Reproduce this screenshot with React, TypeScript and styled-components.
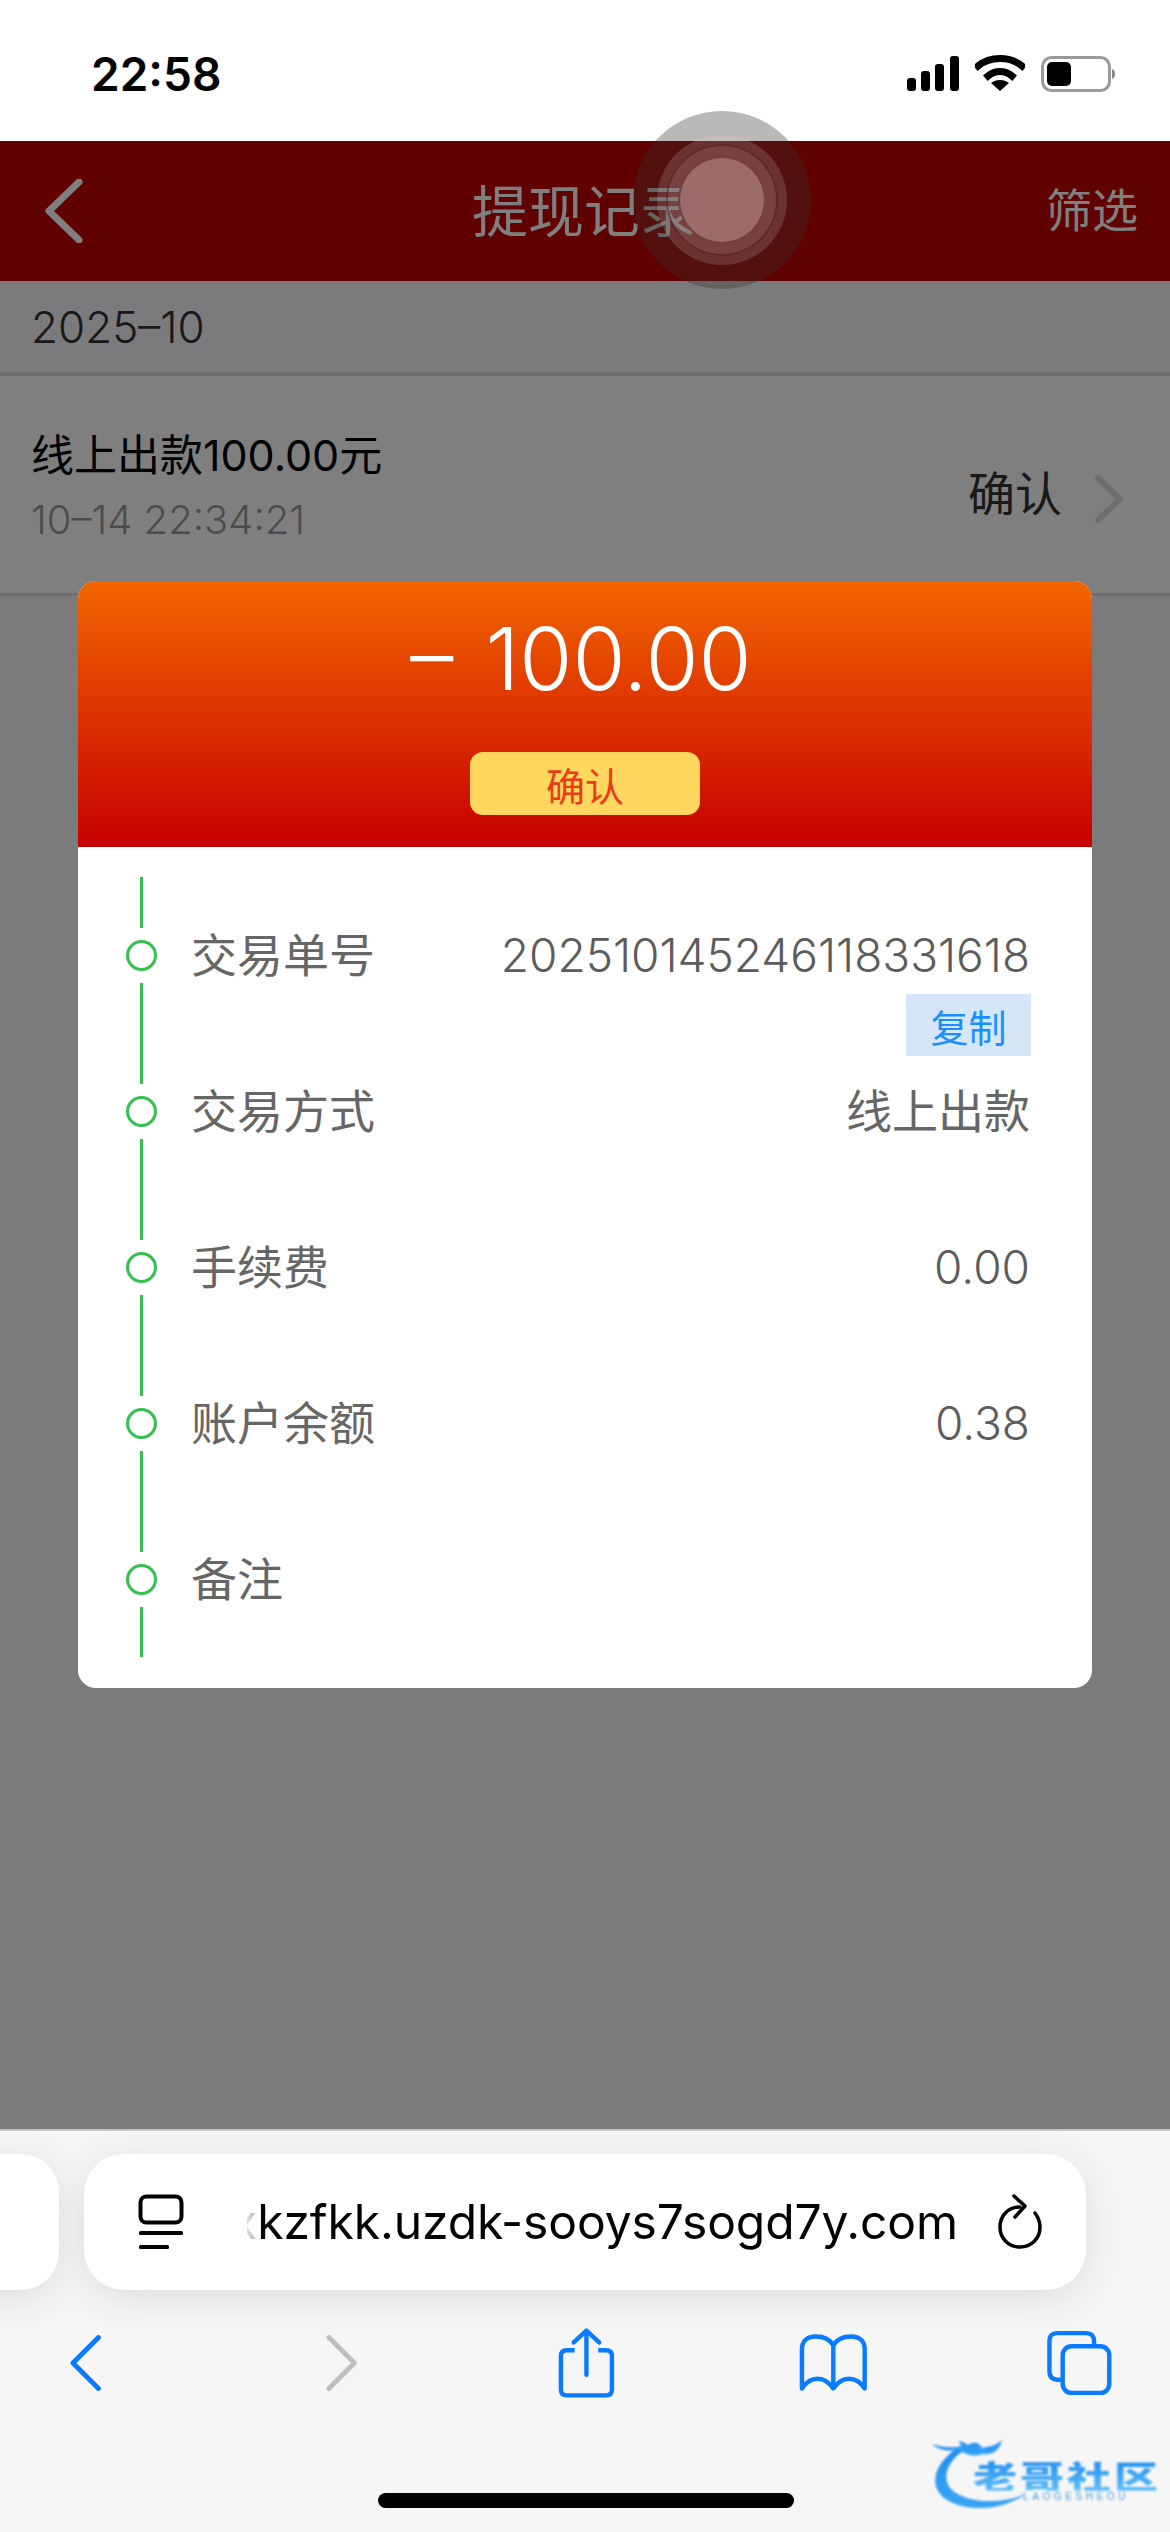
import styled, { createGlobalStyle } from "styled-components";

const UI_FONT = `Inter, "Noto Sans CJK SC", sans-serif`;

const GlobalStyle = createGlobalStyle`
  html, body {
    margin: 0;
    padding: 0;
    background: #fff;
    font-family: ${UI_FONT};
  }
`;

const Phone = styled.div`
  position: relative;
  display: flex;
  flex-direction: column;
  width: 1170px;
  height: 2532px;
  overflow: hidden;
`;

const StatusBar = styled.div`
  display: flex;
  align-items: center;
  justify-content: space-between;
  height: 141px;
  padding: 6px 53px 0 91px;
  box-sizing: border-box;
  background: #fff;
`;

const Clock = styled.div`
  font-size: 46px;
  font-weight: 600;
  color: #000;
`;

const StatusIcons = styled.div`
  display: flex;
  align-items: center;
  gap: 16px;
`;

const Main = styled.div`
  position: relative;
  display: flex;
  flex-direction: column;
  height: 1988px;
  background: #f6f6fa;
`;

const NavBar = styled.div`
  display: flex;
  align-items: center;
  justify-content: space-between;
  height: 140px;
  padding: 0 32px 0 44px;
  box-sizing: border-box;
  background: #c00000;
  color: #fff;
`;

const NavTitle = styled.div`
  font-size: 56px;
  font-weight: 400;
  margin: 0 0 8px 38px;
`;

const NavAction = styled.div`
  font-size: 46px;
  font-weight: 400;
  margin-bottom: 8px;
`;

const DateRow = styled.div`
  height: 95px;
  padding: 0 31px;
  box-sizing: border-box;
  display: flex;
  align-items: center;
  border-bottom: 4px solid #ddd;
  font-size: 44px;
  font-weight: 300;
  color: #333;
`;

const Record = styled.div`
  display: flex;
  align-items: center;
  justify-content: space-between;
  height: 220px;
  padding: 0 46px 0 31px;
  box-sizing: border-box;
  background: #fff;
  border-bottom: 3px solid #ddd;
`;

const RecordTitle = styled.div`
  font-size: 43px;
  font-weight: 400;
  color: #000;
  margin-top: -4px;
`;

const RecordTime = styled.div`
  margin-top: 12px;
  font-size: 40px;
  font-weight: 300;
  color: #999;
`;

const RecordStatus = styled.div`
  display: flex;
  align-items: center;
  gap: 32px;
  margin-top: 12px;
  font-size: 47px;
  font-weight: 400;
  color: #333;
`;

const RecordArrow = styled.svg`
  margin-top: 16px;
`;

const Overlay = styled.div`
  position: absolute;
  inset: 0;
  display: flex;
  justify-content: center;
  align-items: flex-start;
  padding-top: 440px;
  background: rgba(0, 0, 0, 0.5);
`;

const Modal = styled.div`
  width: 1014px;
  border-radius: 18px;
  overflow: hidden;
  background: #fff;
`;

const ModalHead = styled.div`
  display: flex;
  flex-direction: column;
  align-items: center;
  height: 266px;
  padding-top: 15px;
  box-sizing: border-box;
  background: linear-gradient(#f26500, #c60000);
  color: #fff;
`;

const Amount = styled.div`
  margin-right: 8px;
  font-size: 86px;
  font-weight: 300;
  line-height: 126px;
  word-spacing: 8px;
`;

const StatusPill = styled.div`
  display: flex;
  align-items: center;
  justify-content: center;
  width: 230px;
  height: 63px;
  margin-top: 30px;
  border-radius: 13px;
  background: #ffd75f;
  color: #ea3c18;
  font-size: 39px;
  font-weight: 400;
`;

const ModalBody = styled.div`
  padding: 30px 62px 31px 47px;
`;

const Row = styled.div`
  display: flex;
  align-items: center;
  height: 156px;
  font-size: 46px;
  color: #666;
`;

const Marker = styled.div`
  display: flex;
  flex-direction: column;
  align-items: center;
  gap: 12px;
  width: 32px;
  height: 100%;
  margin-right: 34px;
`;

const MarkerLine = styled.div`
  flex: 1;
  width: 3px;
  background: #35c04f;
`;

const MarkerDot = styled.div`
  flex: none;
  width: 31px;
  height: 31px;
  box-sizing: border-box;
  border: 3px solid #35c04f;
  border-radius: 50%;
`;

const RowLabel = styled.div`
  flex: 1;
  font-weight: 400;
  margin-top: -6px;
`;

const RowValue = styled.div<{ $cjk?: boolean }>`
  position: relative;
  font-weight: ${(p) => (p.$cjk ? 400 : 300)};
  margin-top: ${(p) => (p.$cjk ? "-6px" : "0")};
  color: ${(p) => (p.$cjk ? "#666" : "#5c5c5c")};
`;

const CopyButton = styled.div`
  position: absolute;
  right: -1px;
  top: 67px;
  display: flex;
  align-items: center;
  justify-content: center;
  width: 125px;
  height: 62px;
  background: #d5e6f8;
  color: #1a90ff;
  font-size: 38px;
  font-weight: 400;
`;

const Toolbar = styled.div`
  position: relative;
  flex: 1;
  display: flex;
  flex-direction: column;
  background: #f6f6f6;
  border-top: 2px solid #c6c6c6;
`;

const UrlStrip = styled.div`
  display: flex;
  gap: 25px;
  height: 136px;
  margin: 23px 84px 0 -40px;
`;

const TabStub = styled.div`
  flex: none;
  width: 99px;
  border-radius: 38px;
  background: #fff;
  box-shadow: 0 8px 36px rgba(0, 0, 0, 0.1);
`;

const UrlPill = styled.div`
  flex: 1;
  min-width: 0;
  display: flex;
  align-items: center;
  padding: 0 43px 0 54px;
  border-radius: 40px;
  background: #fff;
  box-shadow: 0 8px 36px rgba(0, 0, 0, 0.1);
`;

const UrlIcon = styled.svg`
  flex: none;
`;

const UrlText = styled.div`
  flex: 1;
  min-width: 0;
  display: flex;
  justify-content: flex-end;
  margin: 0 39px 0 63px;
  overflow: hidden;
  white-space: nowrap;
  font-size: 48px;
  letter-spacing: -0.1px;
  line-height: 70px;
  color: #000;
  mask-image: linear-gradient(
    90deg,
    rgba(0, 0, 0, 0.12) 0,
    rgba(0, 0, 0, 0.3) 9px,
    #000 12px
  );
`;

const ActionBar = styled.div`
  display: flex;
  align-items: center;
  justify-content: space-between;
  height: 72px;
  margin-top: 37px;
  padding: 0 58px 0 70px;
`;

const ActionIcon = styled.svg<{ $gap: number }>`
  margin-left: ${(p) => p.$gap}px;
`;

const HomeBar = styled.div`
  position: absolute;
  left: 378px;
  bottom: 24px;
  width: 416px;
  height: 15px;
  border-radius: 8px;
  background: #000;
`;

const Touch = styled.div<{ $size: number; $fill: string; $edge?: string }>`
  display: flex;
  align-items: center;
  justify-content: center;
  flex: none;
  box-sizing: border-box;
  width: ${(p) => p.$size}px;
  height: ${(p) => p.$size}px;
  border-radius: 50%;
  background: ${(p) => p.$fill};
  border: ${(p) => (p.$edge ? `2px solid ${p.$edge}` : "none")};
`;

const TouchAnchor = styled.div`
  position: absolute;
  left: 633px;
  top: 111px;
`;

const Watermark = styled.div`
  position: absolute;
  left: 930px;
  top: 2432px;
  width: 230px;
  height: 84px;
  filter: blur(0.9px);
`;

const WatermarkName = styled.div`
  position: absolute;
  left: 43px;
  top: 27px;
  font-family: "Noto Sans CJK SC", sans-serif;
  font-size: 44px;
  line-height: 44px;
  font-weight: 900;
  letter-spacing: 3px;
  white-space: nowrap;
  transform: scaleY(0.72);
  transform-origin: top left;
  background: linear-gradient(#1f8ef0, #5fbdf8);
  -webkit-background-clip: text;
  background-clip: text;
  color: transparent;
`;

const WatermarkSub = styled.div`
  position: absolute;
  left: 93px;
  top: 60px;
  font-family: "Liberation Sans", sans-serif;
  font-size: 10px;
  line-height: 10px;
  letter-spacing: 3.6px;
  color: #4a9fe0;
  white-space: nowrap;
`;

const rows = [
  { label: "交易单号", value: "202510145246118331618", copy: true },
  { label: "交易方式", value: "线上出款", cjk: true },
  { label: "手续费", value: "0.00" },
  { label: "账户余额", value: "0.38" },
  { label: "备注", value: "" }
];

const BLUE = "#0a7aff";

const App = () => {
  return (
    <Phone>
      <GlobalStyle />
      <StatusBar>
        <Clock>22:58</Clock>
        <StatusIcons>
          <svg width="52" height="35" viewBox="0 0 52 35">
            <rect x="0" y="22" width="9" height="13" rx="3" />
            <rect x="14" y="15" width="9" height="20" rx="3" />
            <rect x="28" y="8" width="9" height="27" rx="3" />
            <rect x="43" y="0" width="9" height="35" rx="3" />
          </svg>
          <svg width="50" height="38" viewBox="0 0 50 38">
            <path
              d="M3 11 C15 1 35 1 47 11"
              fill="none"
              stroke="#000"
              strokeWidth="7"
              strokeLinecap="square"
            />
            <path
              d="M13 21 C20 15 30 15 37 21"
              fill="none"
              stroke="#000"
              strokeWidth="7"
              strokeLinecap="square"
            />
            <path d="M25 36 L16 28 C21 24 29 24 34 28 Z" />
          </svg>
          <svg width="76" height="36" viewBox="0 0 76 36">
            <rect
              x="1.5"
              y="1.5"
              width="67"
              height="33"
              rx="9"
              fill="none"
              stroke="#9a9a9a"
              strokeWidth="3"
            />
            <rect x="6" y="6" width="24" height="24" rx="5" />
            <path d="M71 13 C75 14 75 22 71 23 Z" fill="#8a8a8a" />
          </svg>
        </StatusIcons>
      </StatusBar>

      <Main>
        <NavBar>
          <svg width="40" height="64" viewBox="0 0 40 64">
            <path
              d="M35 3 L5 32 L35 61"
              fill="none"
              stroke="#fff"
              strokeWidth="7"
              strokeLinecap="round"
              strokeLinejoin="round"
            />
          </svg>
          <NavTitle>提现记录</NavTitle>
          <NavAction>筛选</NavAction>
        </NavBar>
        <DateRow>2025–10</DateRow>
        <Record>
          <div>
            <RecordTitle>线上出款100.00元</RecordTitle>
            <RecordTime>10–14 22:34:21</RecordTime>
          </div>
          <RecordStatus>
            确认
            <RecordArrow width="30" height="48" viewBox="0 0 30 48">
              <path
                d="M4 3 L26 24 L4 45"
                fill="none"
                stroke="#ddd"
                strokeWidth="6"
                strokeLinecap="round"
                strokeLinejoin="round"
              />
            </RecordArrow>
          </RecordStatus>
        </Record>

        <Overlay>
          <Modal>
            <ModalHead>
              <Amount>– 100.00</Amount>
              <StatusPill>确认</StatusPill>
            </ModalHead>
            <ModalBody>
              {rows.map((row) => (
                <Row key={row.label}>
                  <Marker>
                    <MarkerLine />
                    <MarkerDot />
                    <MarkerLine />
                  </Marker>
                  <RowLabel>{row.label}</RowLabel>
                  <RowValue $cjk={row.cjk}>
                    {row.value}
                    {row.copy && <CopyButton>复制</CopyButton>}
                  </RowValue>
                </Row>
              ))}
            </ModalBody>
          </Modal>
        </Overlay>
      </Main>

      <TouchAnchor>
        <Touch $size={178} $fill="rgba(55, 50, 45, 0.34)">
          <Touch $size={130} $fill="rgba(225, 215, 215, 0.17)">
            <Touch $size={112} $fill="rgba(235, 220, 220, 0.1)" $edge="rgba(70, 10, 10, 0.45)">
              <Touch $size={88} $fill="rgb(156, 108, 108)" $edge="rgba(70, 10, 10, 0.45)" />
            </Touch>
          </Touch>
        </Touch>
      </TouchAnchor>

      <Toolbar>
        <UrlStrip>
          <TabStub />
          <UrlPill>
            <UrlIcon width="46" height="56" viewBox="0 0 46 56">
              <rect
                x="2.5"
                y="2.5"
                width="41"
                height="26"
                rx="6"
                fill="none"
                stroke="#000"
                strokeWidth="4"
              />
              <rect x="1" y="37" width="44" height="4" rx="1.5" />
              <rect x="1" y="51" width="30" height="4" rx="1.5" />
            </UrlIcon>
            <UrlText>xkzfkk.uzdk-sooys7sogd7y.com</UrlText>
            <UrlIcon width="46" height="56" viewBox="0 0 46 56">
              <path
                d="M23 13 C10 13 3 23 3 33 C3 45 12 53 23 53 C34 53 43 45 43 33 C43 27 41 23 38 19"
                fill="none"
                stroke="#000"
                strokeWidth="3.5"
                strokeLinecap="round"
              />
              <path
                d="M17 2 L28 12 L18 23"
                fill="none"
                stroke="#000"
                strokeWidth="3.5"
                strokeLinecap="round"
                strokeLinejoin="round"
              />
            </UrlIcon>
          </UrlPill>
        </UrlStrip>
        <ActionBar>
          <svg width="32" height="56" viewBox="0 0 32 56">
            <path
              d="M29 2 L3 28 L29 54"
              fill="none"
              stroke={BLUE}
              strokeWidth="5"
              strokeLinecap="round"
              strokeLinejoin="round"
            />
          </svg>
          <ActionIcon $gap={225} width="32" height="56" viewBox="0 0 32 56">
            <path
              d="M3 2 L29 28 L3 54"
              fill="none"
              stroke="#bfbfbf"
              strokeWidth="5"
              strokeLinecap="round"
              strokeLinejoin="round"
            />
          </ActionIcon>
          <ActionIcon $gap={200} width="58" height="72" viewBox="0 0 58 72">
            <path
              d="M17 23 H9 C5 23 3 25 3 29 V63 C3 67 5 69 9 69 H49 C53 69 55 67 55 63 V29 C55 25 53 23 49 23 H41"
              fill="none"
              stroke={BLUE}
              strokeWidth="4.5"
            />
            <path
              d="M29 48 V3 M16 15 L29 3 L42 15"
              fill="none"
              stroke={BLUE}
              strokeWidth="4.5"
              strokeLinecap="round"
              strokeLinejoin="round"
            />
          </ActionIcon>
          <ActionIcon $gap={184} width="70" height="60" viewBox="0 0 70 60">
            <path
              d="M35 12 C31 5 24 3 17 3 C8 3 3 8 3 16 V56 C8 48 13 46 19 46 C26 46 31 50 35 56 C39 50 44 46 51 46 C57 46 62 48 67 56 V16 C67 8 62 3 53 3 C46 3 39 5 35 12 Z M35 12 V56"
              fill="none"
              stroke={BLUE}
              strokeWidth="4.5"
              strokeLinejoin="round"
            />
          </ActionIcon>
          <ActionIcon $gap={180} width="66" height="66" viewBox="0 0 66 66">
            <path
              d="M16 50 H11 C5 50 2.5 47 2.5 42 V11 C2.5 5 5 2.5 11 2.5 H40 C45 2.5 48 5 48 11 V16"
              fill="none"
              stroke={BLUE}
              strokeWidth="4.5"
            />
            <rect
              x="16"
              y="16"
              width="47.5"
              height="47.5"
              rx="9"
              fill="none"
              stroke={BLUE}
              strokeWidth="4.5"
            />
          </ActionIcon>
        </ActionBar>
        <HomeBar />
      </Toolbar>

      <Watermark>
        <svg width="110" height="84" viewBox="0 0 110 84">
          <defs>
            <linearGradient id="dragon" x1="0" y1="0" x2="0" y2="1">
              <stop offset="0" stopColor="#1f8ef0" />
              <stop offset="1" stopColor="#3aa6f5" />
            </linearGradient>
          </defs>
          <path
            d="M30 14 C8 28 -4 50 14 66 C32 80 70 80 96 62 C72 72 38 72 22 58 C10 46 18 28 36 17 Z"
            fill="url(#dragon)"
          />
          <path
            d="M2 12 C14 16 24 16 32 14 C26 8 30 8 38 13 C46 8 50 12 52 16 C60 14 66 14 72 8 C70 18 62 24 52 22 C44 26 36 22 28 18 C18 20 8 18 2 12 Z"
            fill="url(#dragon)"
          />
        </svg>
        <WatermarkName>老哥社区</WatermarkName>
        <WatermarkSub>LAOGESHEOU</WatermarkSub>
      </Watermark>
    </Phone>
  );
};

export default App;
